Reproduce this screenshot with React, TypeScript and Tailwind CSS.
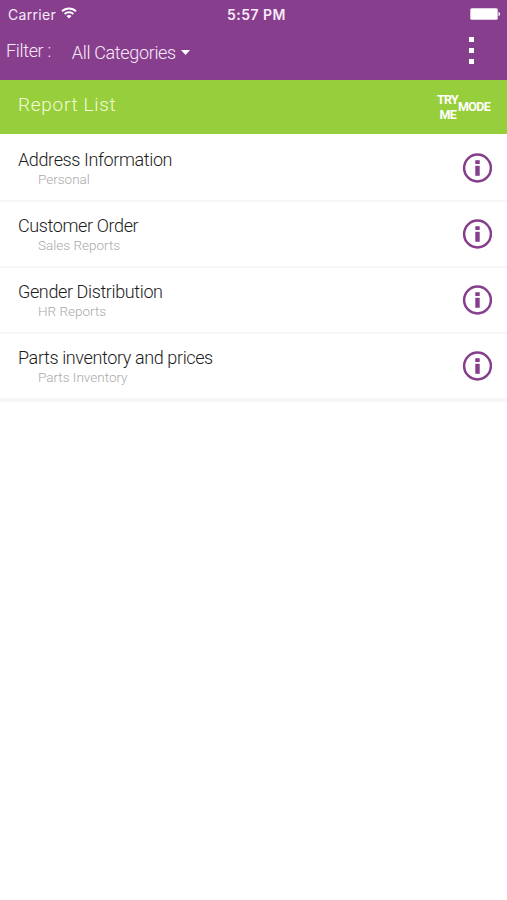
interface Report {
  name: string;
  category: string;
}

const reports: Report[] = [
  { name: 'Address Information', category: 'Personal' },
  { name: 'Customer Order', category: 'Sales Reports' },
  { name: 'Gender Distribution', category: 'HR Reports' },
  { name: 'Parts inventory and prices', category: 'Parts Inventory' },
];

function WifiIcon() {
  return (
    <svg className="h-[12px] w-[16px]" viewBox="0 0 16 12" fill="none" stroke="white" strokeWidth="1.9">
      <path d="M1 4.3C4.9 .5 11.1 .5 15 4.3" />
      <path d="M3.6 7C6.1 4.7 9.9 4.7 12.4 7" />
      <path d="M5.5 8.9C6.9 7.6 9.1 7.6 10.5 8.9L8 11.5Z" fill="white" stroke="none" />
    </svg>
  );
}

function BatteryIcon() {
  return (
    <svg className="h-[12px] w-[31px]" viewBox="0 0 31 12" fill="white">
      <rect x="0.3" y="0.2" width="27.4" height="11.6" rx="1.6" />
      <path d="M28.5 4C30.6 4.4 30.6 7.6 28.5 8Z" />
    </svg>
  );
}

function InfoIcon() {
  return (
    <svg className="h-[30px] w-[30px]" viewBox="0 0 30 30" fill="#853e8c">
      <circle cx="15.5" cy="15" r="13.4" fill="none" stroke="#853e8c" strokeWidth="2.5" />
      <rect x="13.3" y="7.2" width="4.4" height="3.8" />
      <rect x="13.3" y="12.8" width="4.4" height="10" />
    </svg>
  );
}

function StatusBar() {
  return (
    <div className="grid h-7 grid-cols-3 items-center pl-2 pr-[6px] font-[Inter,sans-serif] leading-none">
      <div className="flex items-center gap-[5px]">
        <span className="pt-px text-[14px] tracking-[0.3px]">Carrier</span>
        <span className="-mt-[2px]">
          <WifiIcon />
        </span>
      </div>
      <span className="pl-1 pt-px text-center text-[14px] font-semibold tracking-[0.5px]">5:57 PM</span>
      <div className="-mt-px flex justify-end">
        <BatteryIcon />
      </div>
    </div>
  );
}

function ReportRow({ name, category }: Report) {
  return (
    <li className="flex h-[66px] items-center justify-between border-b-2 border-[#f7f7f7] pl-[18px] pr-[15px] last:h-[68px] last:border-b-4">
      <div>
        <h2 className="text-[18px] font-light leading-[22px] tracking-[-0.38px] text-[#1c1c1c]">{name}</h2>
        <p className="pl-5 text-[13.5px] font-light leading-[17px] text-[#aaa]">{category}</p>
      </div>
      <button aria-label="Info">
        <InfoIcon />
      </button>
    </li>
  );
}

export default function App() {
  return (
    <div className="min-h-screen bg-white font-[Roboto,sans-serif]">
      <header className="h-20 bg-[#873f8d] text-[#f8eaf9]">
        <StatusBar />
        <div className="flex h-[46px] items-center pl-[6px] pr-[33px] text-[18px] font-light leading-none tracking-[-0.34px]">
          <span>Filter :</span>
          <button className="ml-[21px] mt-[3px] flex items-center gap-[5px]">
            All Categories
            <svg className="h-[5px] w-[9px]" viewBox="0 0 9 5" fill="white">
              <path d="M0 0H9L4.5 5Z" />
            </svg>
          </button>
          <button className="mb-[2px] ml-auto flex flex-col gap-[6px]" aria-label="Menu">
            <span className="h-[5px] w-[5px] bg-white" />
            <span className="h-[5px] w-[5px] bg-white" />
            <span className="h-[5px] w-[5px] bg-white" />
          </button>
        </div>
      </header>

      <div className="flex h-[54px] items-center justify-between bg-[#97ce3b] pl-[18px] pr-[17px] text-white">
        <h1 className="mb-[5px] text-[19px] font-light leading-none tracking-[0.7px] text-[#f3fbdc]">Report List</h1>
        <div className="mb-px flex items-center text-[12.5px] font-bold leading-[15px] tracking-[-0.7px]">
          <div className="text-right">
            <div>TRY</div>
            <div className="pr-[2px]">ME</div>
          </div>
          <span className="-mt-px">MODE</span>
        </div>
      </div>

      <ul className="pt-[2px]">
        {reports.map((report) => (
          <ReportRow key={report.name} {...report} />
        ))}
      </ul>
    </div>
  );
}
